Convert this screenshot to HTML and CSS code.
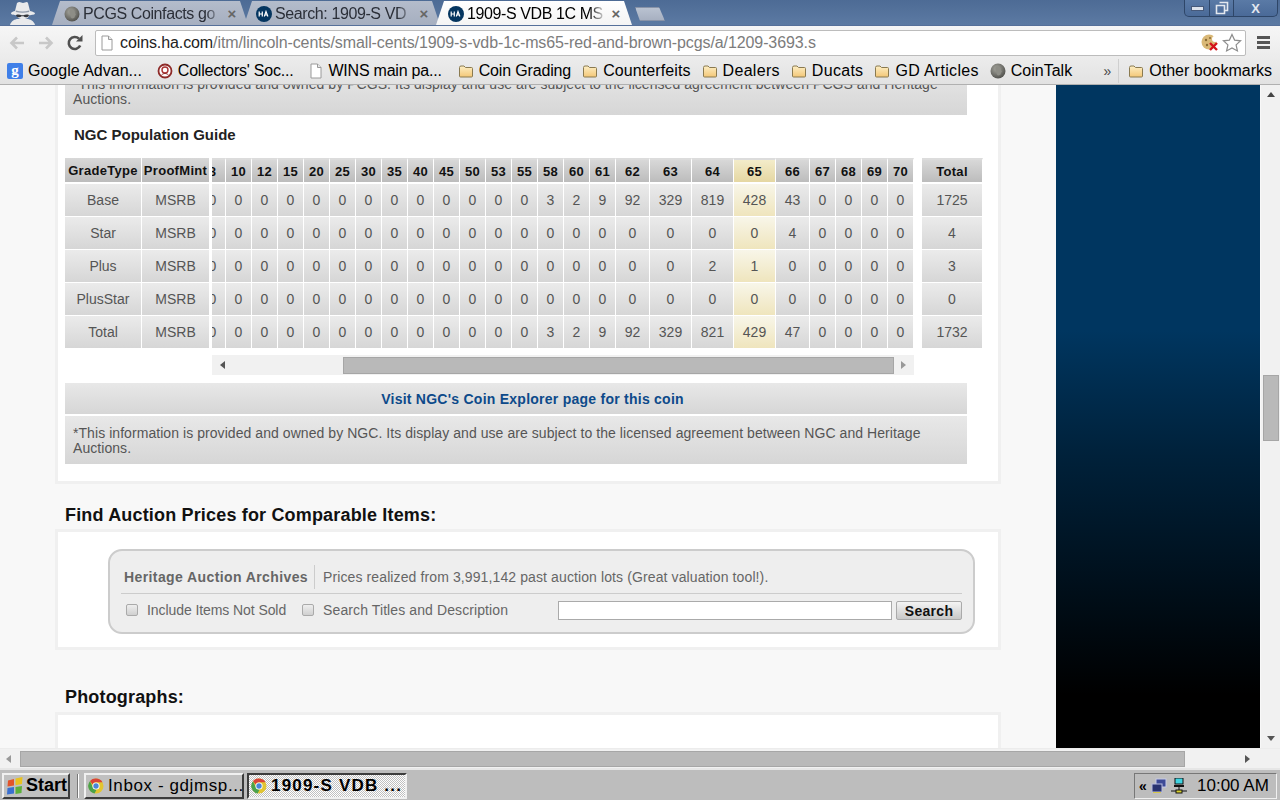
FILE: index.html
```html
<!DOCTYPE html>
<html lang="en">
<head>
<meta charset="utf-8">
<title>1909-S VDB 1C MS65 Red and Brown PCGS</title>
<link rel="stylesheet" href="styles.css">
</head>
<body>
<svg class="defs" width="0" height="0" aria-hidden="true">
  <defs>
    <radialGradient id="coinfill" cx="40%" cy="35%" r="70%"><stop offset="0" stop-color="#a8a8a0"/><stop offset="1" stop-color="#4e4e4a"/></radialGradient>
    <linearGradient id="folderfill" x1="0" y1="0" x2="0" y2="1"><stop offset="0" stop-color="#fdeec4"/><stop offset="1" stop-color="#f3c777"/></linearGradient>
    <symbol id="coin" viewBox="0 0 16 16"><circle cx="8" cy="8" r="7.5" fill="url(#coinfill)"/><path d="M6 3.5c3-1 5 1 5 3.5l1 2-1 .5c0 2-1 3-3 3-2-1-1-3-2-4-1-2-1-4 0-5z" fill="#8d8d86"/></symbol>
    <symbol id="ha" viewBox="0 0 16 16"><circle cx="8" cy="8" r="8" fill="#04355f"/><path d="M3.2 5.5v5M6.3 5.5v5M3.2 8h3.1M8.3 10.5l1.7-5 1.9 5M9 9h2.4" fill="none" stroke="#fff" stroke-width="1.2"/></symbol>
    <symbol id="folder" viewBox="0 0 16 16"><path d="M1.5 4.5a1.500 1.500 0 0 1 1.500-1.500h3l1.500 1.500h6a1 1 0 0 1 1 1v7.500a1 1 0 0 1-1 1h-11a1 1 0 0 1-1-1z" fill="url(#folderfill)" stroke="#8a7a50"/></symbol>
    <symbol id="page" viewBox="0 0 14 16"><path d="M2 1h6.500l3.500 3.500v10.500h-10z" fill="#fff" stroke="#9a9a9a"/><path d="M8.500 1v3.500h3.500" fill="#e8e8e8" stroke="#9a9a9a"/></symbol>
    <symbol id="chrome" viewBox="0 0 16 16"><circle cx="8" cy="8" r="7.500" fill="#e2c531"/><path d="M8 .5a7.500 7.500 0 0 1 6.500 3.750H8a3.750 3.750 0 0 0-3.400 2.200L2 2.900A7.500 7.500 0 0 1 8 .5z" fill="#d94438"/><path d="M1.950 3.200 5.200 9.800a3.750 3.750 0 0 0 3.300 1.900L6.500 15.400A7.500 7.500 0 0 1 1.950 3.200z" fill="#4aa24a"/><circle cx="8" cy="8" r="3.600" fill="#fff"/><circle cx="8" cy="8" r="2.700" fill="#4a86d8"/></symbol>
  </defs>
</svg>

<div class="window">
  <header class="tabstrip">
    <svg class="spy" viewBox="3 0 28 25" aria-hidden="true">
      <path d="M10 11 12 3c3-2 4 0 6 0s4-2 5 0l2 8c3 .7 5 1.500 5 2.500s-3 1.500-6 1.800c0 1-1 4-6 4s-6-3-6-4c-3-.3-6-.8-6-1.800S7 11.700 10 11z" fill="#e9eaec"/>
      <path d="M5 25c1-4 5-6 8-6h9c3 0 7 2 8 6z" fill="#e9eaec"/>
      <path d="M11 10.500c4 1.200 9 1.200 13 0l.3 1.600c-4 1-9.600 1-13.600 0z" fill="#8f99a8"/>
      <path d="M11 15c2-.8 4-.5 5.500.3l2 0c1.500-.8 3.500-1.100 5.500-.3-.3 2.500-4 3-5.500 1.200h-2C15 18 11.300 17.500 11 15z" fill="#34363b"/>
    </svg>
    <div class="tab">
      <svg class="fav"><use href="#coin"/></svg>
      <span class="tab-title">PCGS Coinfacts go</span><span class="tab-x">×</span>
    </div>
    <div class="tab">
      <svg class="fav"><use href="#ha"/></svg>
      <span class="tab-title">Search: 1909-S VD</span><span class="tab-x">×</span>
    </div>
    <div class="tab tab-active">
      <svg class="fav"><use href="#ha"/></svg>
      <span class="tab-title">1909-S VDB 1C MS</span><span class="tab-x">×</span>
    </div>
    <div class="newtab"></div>
    <div class="winctl">
      <span class="wc wc-min"><i></i></span>
      <span class="wc wc-max"><svg width="14" height="14" viewBox="0 0 14 14"><path d="M4.500 1.500h8v8h-2.500M1.500 4.500h8v8h-8z" fill="none" stroke="#e3e8ef" stroke-width="1.600"/></svg></span>
      <span class="wc wc-close">X</span>
    </div>
  </header>

  <nav class="toolbar">
    <svg class="nav-ic" viewBox="0 0 18 18"><path d="M16 9H4M9 3.500 3.500 9 9 14.500" fill="none" stroke="#c8c8c8" stroke-width="2.600"/></svg>
    <svg class="nav-ic" viewBox="0 0 18 18"><path d="M2 9h12M9 3.500 14.500 9 9 14.500" fill="none" stroke="#c8c8c8" stroke-width="2.600"/></svg>
    <svg class="nav-ic reload" viewBox="0 0 18 18"><path d="M14.200 11.500A6 6 0 1 1 13 4.700" fill="none" stroke="#505050" stroke-width="2.600"/><path d="M10 7.500h6.500V1z" fill="#505050"/></svg>
    <div class="omnibox">
      <svg class="url-page"><use href="#page"/></svg>
      <span class="url"><span class="url-host">coins.ha.com</span>/itm/lincoln-cents/small-cents/1909-s-vdb-1c-ms65-red-and-brown-pcgs/a/1209-3693.s</span>
      <svg class="cookie" viewBox="0 0 18 18"><circle cx="8" cy="8" r="7.500" fill="#d9b877"/><circle cx="5" cy="6" r="1.200" fill="#8a6a35"/><circle cx="9" cy="4" r="1" fill="#8a6a35"/><circle cx="6" cy="11" r="1.200" fill="#8a6a35"/><circle cx="14" cy="5" r="3" fill="#fff"/><path d="M9 9l7 7M16 9l-7 7" stroke="#d4141a" stroke-width="2.400"/></svg>
      <svg class="star" viewBox="0 0 20 20"><path d="m10 1.500 2.600 5.600 6 .7-4.500 4.100 1.300 6L10 14.900l-5.400 3 1.300-6L1.400 7.800l6-.7z" fill="#fff" stroke="#8c8c8c" stroke-width="1.200"/></svg>
    </div>
    <div class="menu"><i></i><i></i><i></i></div>
  </nav>

  <nav class="bookmarks">
    <a class="bm"><svg class="bm-ic" viewBox="0 0 16 16"><rect width="16" height="16" rx="2" fill="#3f7fe8"/><text x="8" y="12" class="g-letter">g</text></svg>Google Advan...</a>
    <a class="bm bm-tight"><svg class="bm-ic" viewBox="0 0 16 16"><circle cx="8" cy="8" r="6.500" fill="#fff" stroke="#8e2a28" stroke-width="1.800"/><circle cx="8" cy="7" r="3" fill="none" stroke="#a33" stroke-width="1.400"/><path d="M4.500 12c2-2 5-2 7 0" stroke="#8e2a28" fill="none"/></svg>Collectors' Soc...</a>
    <a class="bm bm-tight"><svg class="bm-ic bm-page"><use href="#page"/></svg>WINS main pa...</a>
    <a class="bm bm-f bm-grade"><svg class="bm-ic"><use href="#folder"/></svg>Coin Grading</a>
    <a class="bm bm-f bm-fake"><svg class="bm-ic"><use href="#folder"/></svg>Counterfeits</a>
    <a class="bm bm-f bm-wide"><svg class="bm-ic"><use href="#folder"/></svg>Dealers</a>
    <a class="bm bm-f bm-wide"><svg class="bm-ic"><use href="#folder"/></svg>Ducats</a>
    <a class="bm bm-f bm-wide"><svg class="bm-ic"><use href="#folder"/></svg>GD Articles</a>
    <a class="bm bm-f"><svg class="bm-ic"><use href="#coin"/></svg>CoinTalk</a>
    <span class="bm-more">»</span>
    <a class="bm bm-other"><svg class="bm-ic"><use href="#folder"/></svg>Other bookmarks</a>
  </nav>

  <div class="browser">
    <div class="viewport-row">
      <div class="viewport">
        <main class="main">
          <section class="panel panel-first">
            <p class="note">*This information is provided and owned by PCGS. Its display and use are subject to the licensed agreement between PCGS and Heritage Auctions.</p>
            <h3 class="pop-title">NGC Population Guide</h3>
            <div class="pop">
              <table class="grid grid-fixed">
                <colgroup><col class="c77"><col class="c68"></colgroup>
                <thead><tr><th>GradeType</th><th>ProofMint</th></tr></thead>
                <tbody>
                  <tr><td>Base</td><td>MSRB</td></tr>
                  <tr><td>Star</td><td>MSRB</td></tr>
                  <tr><td>Plus</td><td>MSRB</td></tr>
                  <tr><td>PlusStar</td><td>MSRB</td></tr>
                  <tr><td>Total</td><td>MSRB</td></tr>
                </tbody>
              </table>
              <div class="scroller">
                <table class="grid grid-scroll">
                  <colgroup>
                    <col class="c26"><col class="c26"><col class="c26"><col class="c26"><col class="c26"><col class="c26"><col class="c26"><col class="c26"><col class="c26"><col class="c26"><col class="c26"><col class="c26"><col class="c26"><col class="c26"><col class="c26"><col class="c26">
                    <col class="c34"><col class="c42"><col class="c42"><col class="c42"><col class="c34"><col class="c26"><col class="c26"><col class="c26"><col class="c26">
                  </colgroup>
                  <thead><tr><th>8</th><th>10</th><th>12</th><th>15</th><th>20</th><th>25</th><th>30</th><th>35</th><th>40</th><th>45</th><th>50</th><th>53</th><th>55</th><th>58</th><th>60</th><th>61</th><th>62</th><th>63</th><th>64</th><th class="hl">65</th><th>66</th><th>67</th><th>68</th><th>69</th><th>70</th></tr></thead>
                  <tbody>
                    <tr><td>0</td><td>0</td><td>0</td><td>0</td><td>0</td><td>0</td><td>0</td><td>0</td><td>0</td><td>0</td><td>0</td><td>0</td><td>0</td><td>3</td><td>2</td><td>9</td><td>92</td><td>329</td><td>819</td><td class="hl">428</td><td>43</td><td>0</td><td>0</td><td>0</td><td>0</td></tr>
                    <tr><td>0</td><td>0</td><td>0</td><td>0</td><td>0</td><td>0</td><td>0</td><td>0</td><td>0</td><td>0</td><td>0</td><td>0</td><td>0</td><td>0</td><td>0</td><td>0</td><td>0</td><td>0</td><td>0</td><td class="hl">0</td><td>4</td><td>0</td><td>0</td><td>0</td><td>0</td></tr>
                    <tr><td>0</td><td>0</td><td>0</td><td>0</td><td>0</td><td>0</td><td>0</td><td>0</td><td>0</td><td>0</td><td>0</td><td>0</td><td>0</td><td>0</td><td>0</td><td>0</td><td>0</td><td>0</td><td>2</td><td class="hl">1</td><td>0</td><td>0</td><td>0</td><td>0</td><td>0</td></tr>
                    <tr><td>0</td><td>0</td><td>0</td><td>0</td><td>0</td><td>0</td><td>0</td><td>0</td><td>0</td><td>0</td><td>0</td><td>0</td><td>0</td><td>0</td><td>0</td><td>0</td><td>0</td><td>0</td><td>0</td><td class="hl">0</td><td>0</td><td>0</td><td>0</td><td>0</td><td>0</td></tr>
                    <tr><td>0</td><td>0</td><td>0</td><td>0</td><td>0</td><td>0</td><td>0</td><td>0</td><td>0</td><td>0</td><td>0</td><td>0</td><td>0</td><td>3</td><td>2</td><td>9</td><td>92</td><td>329</td><td>821</td><td class="hl">429</td><td>47</td><td>0</td><td>0</td><td>0</td><td>0</td></tr>
                  </tbody>
                </table>
                <div class="hscroll">
                  <span class="arr arr-left"></span>
                  <span class="hthumb"></span>
                  <span class="arr arr-right"></span>
                </div>
              </div>
              <table class="grid grid-total">
                <colgroup><col class="c61"></colgroup>
                <thead><tr><th>Total</th></tr></thead>
                <tbody><tr><td>1725</td></tr><tr><td>4</td></tr><tr><td>3</td></tr><tr><td>0</td></tr><tr><td>1732</td></tr></tbody>
              </table>
            </div>
            <a class="visit">Visit NGC's Coin Explorer page for this coin</a>
            <p class="note">*This information is provided and owned by NGC. Its display and use are subject to the licensed agreement between NGC and Heritage Auctions.</p>
          </section>

          <h2 class="heading">Find Auction Prices for Comparable Items:</h2>
          <section class="panel panel-archive">
            <form class="archive">
              <div class="arch-top">
                <strong class="arch-name">Heritage Auction Archives</strong>
                <span class="arch-desc">Prices realized from 3,991,142 past auction lots (Great valuation tool!).</span>
              </div>
              <div class="arch-bottom">
                <label class="chk chk-one"><i class="box"></i>Include Items Not Sold</label>
                <label class="chk"><i class="box"></i>Search Titles and Description</label>
                <span class="field"></span>
                <span class="btn">Search</span>
              </div>
            </form>
          </section>

          <h2 class="heading heading-photo">Photographs:</h2>
          <section class="panel panel-photo"></section>
        </main>
        <aside class="ad"></aside>
      </div>
      <div class="vscroll">
        <span class="arr arr-up"></span>
        <span class="vthumb"></span>
        <span class="arr arr-down"></span>
      </div>
    </div>
    <div class="bscroll">
      <span class="arr arr-left"></span>
      <span class="bthumb"></span>
      <span class="arr arr-right"></span>
    </div>
  </div>

  <footer class="taskbar">
    <div class="task start">
      <svg class="flag" viewBox="0 0 18 18"><path d="M2 3.500 8 2v6.500L1.500 9.500z" fill="#e2542a"/><path d="M9.500 1.500 16.500 0l-.5 7-6.500 1.200z" fill="#e9c21f"/><path d="M1.500 11 8 10v6.500L1 17.500z" fill="#3a6fd0"/><path d="M9.500 10 16 9l-.5 7-6 1z" fill="#5cb03a"/></svg>
      Start
    </div>
    <span class="grip"></span>
    <div class="task task-item">
      <svg class="task-ic"><use href="#chrome"/></svg>Inbox - gdjmsp...
    </div>
    <div class="task task-item task-on">
      <svg class="task-ic"><use href="#chrome"/></svg>1909-S VDB ...
    </div>
    <div class="tray">
      <span class="tray-more">«</span>
      <svg class="tray-ic" viewBox="0 0 16 16"><rect x="5" y="1" width="10" height="8" fill="#3d4a96" stroke="#c7cbe8"/><rect x="1" y="6" width="10" height="8" fill="#2a3470" stroke="#b9bde0"/><path d="M2 14.500h8" stroke="#d8c94a"/></svg>
      <svg class="tray-ic" viewBox="0 0 16 16"><rect x="4" y="0" width="8" height="6" fill="#3fd3e0" stroke="#111"/><rect x="3" y="7" width="10" height="2" fill="#111"/><path d="M0 13h16" stroke="#111"/><path d="M8 9v3" stroke="#111"/><rect x="5" y="12" width="6" height="3" fill="#d8d030" stroke="#111"/></svg>
      <span class="clock">10:00 AM</span>
    </div>
  </footer>
</div>
</body>
</html>
```
FILE: styles.css
```css
* { box-sizing: border-box; }
html, body { margin: 0; padding: 0; height: 100%; overflow: hidden; }
body { font-family: "Liberation Sans", Arial, sans-serif; color: #222; }
.defs { position: absolute; }
.window { width: 1280px; height: 800px; display: flex; flex-direction: column; overflow: hidden; }

/* tab strip */
.tabstrip { height: 25px; flex: none; display: flex; align-items: flex-end; background: linear-gradient(#4d6b95, #5c7aa3); position: relative; }
.spy { width: 30px; height: 25px; margin-left: 7px; margin-right: 15px; flex: none; }
.tab { width: 196px; height: 24px; margin-right: -4px; flex: none; display: flex; align-items: center; padding: 1px 10px 0 12px; background: linear-gradient(#b4bccb, #a6afc0); color: #2b2f38; font-size: 16px; clip-path: polygon(0 100%, 8px 0, 188px 0, 196px 100%); }
.tab-active { background: linear-gradient(#fff, #f4f4f4); color: #000; }
.fav { width: 16px; height: 16px; flex: none; margin-right: 3px; }
.tab-title { flex: 1; overflow: hidden; white-space: nowrap; min-width: 0; letter-spacing: -0.4px; -webkit-mask-image: linear-gradient(90deg, #000 88%, transparent); mask-image: linear-gradient(90deg, #000 88%, transparent); }
.tab-x { font-size: 15px; font-weight: bold; color: #666; margin-left: 4px; width: 12px; text-align: center; }
.newtab { width: 30px; height: 14px; margin: 0 0 4px 7px; background: linear-gradient(#b9c2d1, #a7b0c1); border: 1px solid #8893a8; clip-path: polygon(0 0, 24px 0, 30px 100%, 5px 100%); }
.winctl { margin-left: auto; align-self: flex-start; margin-right: 2px; display: flex; height: 17px; border: 1px solid #2e4668; border-top: 0; border-radius: 0 0 5px 5px; background: linear-gradient(#5a7aa6, #4a6a98); }
.wc { display: flex; align-items: center; justify-content: center; border-right: 1px solid #2e4668; color: #e3e8ef; font-weight: bold; font-size: 13px; }
.wc-min { width: 25px; }
.wc-min i { width: 13px; height: 5px; border: 1px solid #46597a; background: #dde3ec; }
.wc-max { width: 24px; }
.wc-close { width: 43px; border-right: 0; }

/* toolbar */
.toolbar { height: 32px; flex: none; display: flex; align-items: center; background: linear-gradient(#f6f6f6, #ececec); border-top: 1px solid #56709a; padding: 2px 0 0 8px; }
.nav-ic { width: 18px; height: 18px; flex: none; margin-right: 11px; }
.omnibox { width: 1151px; height: 26px; flex: none; background: #fff; border: 1px solid #bcbcbc; border-radius: 2px; display: flex; align-items: center; padding-left: 4px; }
.url-page { width: 14px; height: 16px; flex: none; margin-right: 6px; }
.url { flex: 1; white-space: nowrap; overflow: hidden; font-size: 16px; color: #7c7c7c; letter-spacing: -0.1px; }
.url-host { color: #222; }
.cookie { width: 18px; height: 18px; flex: none; margin-right: 3px; }
.star { width: 20px; height: 20px; flex: none; margin-right: 3px; }
.menu { display: flex; flex-direction: column; gap: 2px; margin-left: 11px; }
.menu i { display: block; width: 13px; height: 3px; background: #555; }

/* bookmarks */
.bookmarks { height: 28px; flex: none; display: flex; align-items: center; background: linear-gradient(#ececec, #e2e2e2); border-bottom: 1px solid #b0b0b0; padding: 0 8px 0 7px; font-size: 16px; color: #000; }
.bm { display: flex; align-items: center; white-space: nowrap; margin-right: 15px; }
.bm-tight { letter-spacing: -0.22px; margin-right: 16px; }
.bm-f { margin-right: 11px; }
.bm-grade { letter-spacing: -0.15px; }
.bm-fake { letter-spacing: 0.1px; }
.bm-wide { letter-spacing: 0.3px; }
.bm-ic { width: 16px; height: 16px; flex: none; margin-right: 5px; }
.bm-page { width: 14px; }
.g-letter { font-family: "Liberation Serif", serif; font-size: 15px; font-weight: bold; fill: #fff; text-anchor: middle; }
.bm-more { margin-left: auto; font-size: 14px; color: #444; padding-right: 7px; border-right: 1px solid #cfcfcf; height: 24px; line-height: 24px; margin-right: 9px; }
.bm-other { margin-right: 0; }

/* browser area */
.browser { flex: 1; display: flex; flex-direction: column; min-height: 0; }
.viewport-row { flex: 1; display: flex; min-height: 0; }
.viewport { flex: 1; display: flex; background: #f8f8f8; overflow: hidden; min-width: 0; }
.main { width: 946px; margin-left: 55px; flex: none; }
.ad { width: 204px; flex: none; margin-left: 55px; margin-right: 1px; background: linear-gradient(#003660 0, #003660 37%, #00213a 56%, #000 92%); }

.panel { background: #fff; border: 3px solid #f0f0f0; }
.panel-first { margin-top: -43px; padding: 22px 15px 17px 7px; width: 946px; }
.note { margin: 0; width: 902px; padding: 10px 8px 8px; font-size: 14px; line-height: 15px; color: #555; letter-spacing: 0.06px; background: linear-gradient(#e8e8e8, #d6d6d6); }
.pop-title { margin: 0; height: 43px; padding: 10px 0 0 9px; line-height: 20px; font-size: 15px; font-weight: bold; color: #222; }

.pop { display: flex; align-items: flex-start; }
.grid { border-collapse: separate; border-spacing: 0; table-layout: fixed; font-size: 14px; }
.grid th, .grid td { padding: 0; text-align: center; white-space: nowrap; border-right: 1px solid #fff; overflow: hidden; }
.grid th { height: 26px; border-bottom: 2px solid #fff; font-size: 13px; color: #111; background: linear-gradient(#d8d8d8, #bcbcbc); letter-spacing: 0.3px; }
.grid td { height: 33px; border-bottom: 1px solid #fff; color: #555; background: linear-gradient(#ebebeb, #d6d6d6); }
.grid .hl { background: linear-gradient(#f8f6e9, #efe5bd); }
.grid th.hl { background: linear-gradient(#f3ecca, #e5d7a2); }
.grid-fixed { width: 145px; flex: none; }
.grid-scroll { width: 714px; margin-left: -12px; }
.grid-scroll th, .grid-total th { border-top: 2px solid #dcdcdc; background-clip: padding-box; }
.grid-total { width: 61px; flex: none; margin-left: 8px; }
.c77 { width: 77px; } .c68 { width: 68px; } .c26 { width: 26px; } .c34 { width: 34px; } .c42 { width: 42px; } .c61 { width: 61px; }
.scroller { width: 702px; flex: none; margin-left: 2px; overflow: hidden; }

.hscroll { margin-top: 6px; height: 20px; background: #f1f1f1; display: flex; align-items: center; }
.arr { width: 0; height: 0; flex: none; display: block; border-style: solid; border-color: transparent; }
.arr-left { border-width: 4px 5px 4px 0; border-right-color: #555; }
.arr-right { border-width: 4px 0 4px 5px; border-left-color: #999; }
.hthumb { width: 551px; height: 17px; background: #b9b9b9; border: 1px solid #a6a6a6; }
.hscroll .arr-left { margin-left: 8px; }
.hscroll .hthumb { margin-left: 118px; }
.hscroll .arr-right { margin-left: 7px; }

.visit { display: block; width: 902px; margin-top: 8px; height: 31px; padding-left: 33px; line-height: 32px; text-align: center; font-size: 14px; font-weight: bold; color: #0d4a8a; letter-spacing: 0.25px; background: linear-gradient(#e8e8e8, #d6d6d6); }
.visit + .note { margin-top: 2px; }

.heading { margin: 0; height: 45px; padding: 20px 0 0 10px; line-height: 22px; font-size: 18px; font-weight: bold; color: #111; letter-spacing: 0.17px; }
.heading-photo { height: 62px; padding-top: 36px; }
.panel-archive { padding: 17px 23px 13px 50px; }
.archive { display: block; height: 85px; background: #eee; border: 2px solid #ccc; border-radius: 14px; padding: 0 11px; font-size: 14px; color: #666; letter-spacing: 0.1px; }
.arch-top { height: 43px; display: flex; align-items: flex-end; border-bottom: 1px solid #ccc; padding: 0 3px 4px; }
.arch-name { font-size: 14px; color: #666; height: 24px; line-height: 24px; padding-right: 6px; border-right: 1px solid #ccc; margin-right: 8px; letter-spacing: 0.4px; }
.arch-desc { height: 24px; line-height: 24px; letter-spacing: 0.11px; }
.arch-bottom { display: flex; align-items: center; padding: 0 0 1px 5px; height: 33px; }
.chk { display: flex; align-items: center; white-space: nowrap; }
.chk-one { margin-right: 16px; letter-spacing: -0.08px; }
.box { display: block; width: 12px; height: 12px; margin-right: 9px; border: 1px solid #aaa; border-radius: 2px; background: linear-gradient(#eee, #d0d0d0); }
.field { margin-left: auto; width: 334px; height: 19px; background: #fff; border: 1px solid #aaa; }
.btn { width: 66px; height: 19px; margin-left: 4px; border: 1px solid #aaa; border-radius: 2px; background: linear-gradient(#f4f4f4, #c8c8c8); color: #111; font-size: 14px; font-weight: bold; line-height: 18px; text-align: center; letter-spacing: 0.3px; }
.panel-photo { height: 120px; }

/* page scrollbars */
.vscroll { width: 19px; flex: none; background: #f1f1f1; display: flex; flex-direction: column; align-items: center; }
.vscroll .arr-up { margin-top: 7px; border-width: 0 4px 5px; border-bottom-color: #444; }
.vthumb { width: 16px; height: 66px; margin-top: 278px; background: #b9b9b9; border: 1px solid #a6a6a6; }
.vscroll .arr-down { margin-top: auto; margin-bottom: 7px; border-width: 5px 4px 0; border-top-color: #555; }
.bscroll { height: 20px; flex: none; background: #f1f1f1; display: flex; align-items: center; border-top: 1px solid #ececec; }
.bscroll .arr-left { margin-left: 6px; border-right-color: #999; }
.bthumb { width: 1165px; height: 16px; margin-left: 9px; background: #b9b9b9; border: 1px solid #a6a6a6; }
.bscroll .arr-right { margin-left: 60px; border-left-color: #555; }

/* taskbar */
.taskbar { height: 32px; flex: none; display: flex; align-items: center; gap: 3px; background: #bdbdbd; border-top: 2px solid #e6e6e6; padding: 1px 3px 0 2px; }
.task { height: 26px; display: flex; align-items: center; border: 2px solid; border-color: #f0f0f0 #3c3c3c #3c3c3c #f0f0f0; background: #c0c0c0; font-size: 17px; color: #000; white-space: nowrap; }
.start { width: 68px; font-size: 18px; font-weight: bold; padding-left: 2px; gap: 2px; }
.flag { width: 18px; height: 18px; flex: none; }
.grip { width: 2px; height: 24px; margin: 0 2px 0 4px; border-left: 1px solid #777; border-right: 1px solid #fff; }
.task-item { width: 160px; padding-left: 2px; letter-spacing: 0.6px; }
.task-on { border-color: #3c3c3c #f0f0f0 #f0f0f0 #3c3c3c; font-weight: bold; letter-spacing: 1.2px; background-image: linear-gradient(45deg, #fff 25%, transparent 25%, transparent 75%, #fff 75%), linear-gradient(45deg, #fff 25%, #c0c0c0 25%, #c0c0c0 75%, #fff 75%); background-size: 2px 2px; background-position: 0 0, 1px 1px; }
.task-ic { width: 16px; height: 16px; flex: none; margin-right: 4px; }
.tray { margin-left: auto; width: 143px; height: 26px; display: flex; align-items: center; padding-left: 4px; border: 1px solid; border-color: #777 #f0f0f0 #f0f0f0 #777; font-size: 17px; color: #000; }
.tray-more { width: 12px; font-size: 14px; font-weight: bold; }
.tray-ic { width: 16px; height: 16px; flex: none; margin-right: 4px; }
.clock { margin-left: 6px; white-space: nowrap; }
```
